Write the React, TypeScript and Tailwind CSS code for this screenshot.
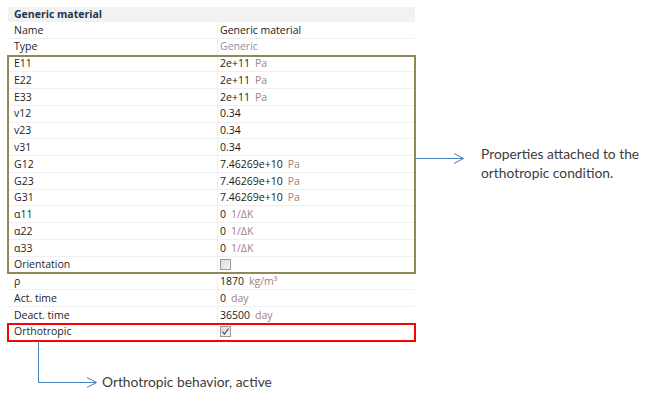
type Row = {
  label: string;
  value?: string;
  unit?: string;
  muted?: boolean;
  check?: 'off' | 'on';
};

const topRows: Row[] = [
  { label: 'Name', value: 'Generic material' },
  { label: 'Type', value: 'Generic', muted: true },
];

const orthoRows: Row[] = [
  { label: 'E11', value: '2e+11', unit: 'Pa' },
  { label: 'E22', value: '2e+11', unit: 'Pa' },
  { label: 'E33', value: '2e+11', unit: 'Pa' },
  { label: 'v12', value: '0.34' },
  { label: 'v23', value: '0.34' },
  { label: 'v31', value: '0.34' },
  { label: 'G12', value: '7.46269e+10', unit: 'Pa' },
  { label: 'G23', value: '7.46269e+10', unit: 'Pa' },
  { label: 'G31', value: '7.46269e+10', unit: 'Pa' },
  { label: 'α11', value: '0', unit: '1/ΔK' },
  { label: 'α22', value: '0', unit: '1/ΔK' },
  { label: 'α33', value: '0', unit: '1/ΔK' },
  { label: 'Orientation', check: 'off' },
];

const bottomRows: Row[] = [
  { label: 'ρ', value: '1870', unit: 'kg/m³' },
  { label: 'Act. time', value: '0', unit: 'day' },
  { label: 'Deact. time', value: '36500', unit: 'day' },
];

function Checkbox({ on }: { on?: boolean }) {
  return (
    <span className="flex h-[11px] w-[11px] items-center justify-center border border-[#9a9a9a] bg-gradient-to-br from-[#dcdcdc] to-[#f4f4f4]">
      {on && (
        <svg width="9" height="9" viewBox="0 0 9 9">
          <path d="M1.5 4.5 L3.5 7 L7.5 1.5" fill="none" stroke="#4a4a4a" strokeWidth="1.2" />
        </svg>
      )}
    </span>
  );
}

function PropRow({ row }: { row: Row }) {
  return (
    <div className="flex h-[16.78px] border-b border-[#f0f0f0]">
      <div className="flex w-[210px] items-center border-r border-[#efefef] pl-[6px] text-[#1e1e1e]">{row.label}</div>
      <div className="flex flex-1 items-center gap-[5px] pl-[2px]">
        {row.check ? (
          <Checkbox on={row.check === 'on'} />
        ) : (
          <>
            <span className={row.muted ? 'text-[#8b93a3]' : 'text-[#1a1a1a]'}>{row.value}</span>
            {row.unit && <span className="text-[#a08282]">{row.unit}</span>}
          </>
        )}
      </div>
    </div>
  );
}

export default function App() {
  return (
    <div className="h-[393px] w-[650px] overflow-hidden bg-white" style={{ fontFamily: '"Open Sans", sans-serif' }}>
      <div className="flex pt-[7px]">
        {/* property grid */}
        <div className="ml-[8px] w-[407px] text-[10.5px] leading-none">
          <div className="flex h-[15px] items-center bg-[#f2f2f2] pl-[6px] font-bold text-[#243650]">Generic material</div>
          {topRows.map((r) => (
            <PropRow key={r.label} row={r} />
          ))}
          <div className="outline outline-2 -outline-offset-1 outline-[#8f8a55]">
            {orthoRows.map((r) => (
              <PropRow key={r.label} row={r} />
            ))}
          </div>
          {bottomRows.map((r) => (
            <PropRow key={r.label} row={r} />
          ))}
          <div className="outline outline-2 -outline-offset-1 outline-[#ff0000]">
            <PropRow row={{ label: 'Orthotropic', check: 'on' }} />
          </div>
        </div>

        {/* right note */}
        <div className="flex items-start">
          <svg className="mt-[141px]" width="52" height="20" viewBox="0 0 52 20">
            <path d="M0 10.5 H48" stroke="#4a7ebb" strokeWidth="1" />
            <path d="M39 5.5 L48.5 10.5 L39 15.5" fill="none" stroke="#4a7ebb" strokeWidth="1" />
          </svg>
          <div className="ml-[14px] mt-[137px] text-[13.8px] leading-[19px] text-[#3c3c3c]" style={{ fontFamily: 'Lato, sans-serif' }}>
            <div>Properties attached to the</div>
            <div>orthotropic condition.</div>
          </div>
        </div>
      </div>

      {/* bottom note */}
      <div className="flex items-start pl-[37px]">
        <svg width="62" height="48" viewBox="0 0 62 48">
          <path d="M1.5 0 V41.5 H59" fill="none" stroke="#4a7ebb" strokeWidth="1" />
          <path d="M50 36.5 L59.5 41.5 L50 46.5" fill="none" stroke="#4a7ebb" strokeWidth="1" />
        </svg>
        <div className="ml-[3px] mt-[31px] text-[13.8px] leading-[19px] text-[#3c3c3c]" style={{ fontFamily: 'Lato, sans-serif' }}>
          Orthotropic behavior, active
        </div>
      </div>
    </div>
  );
}
